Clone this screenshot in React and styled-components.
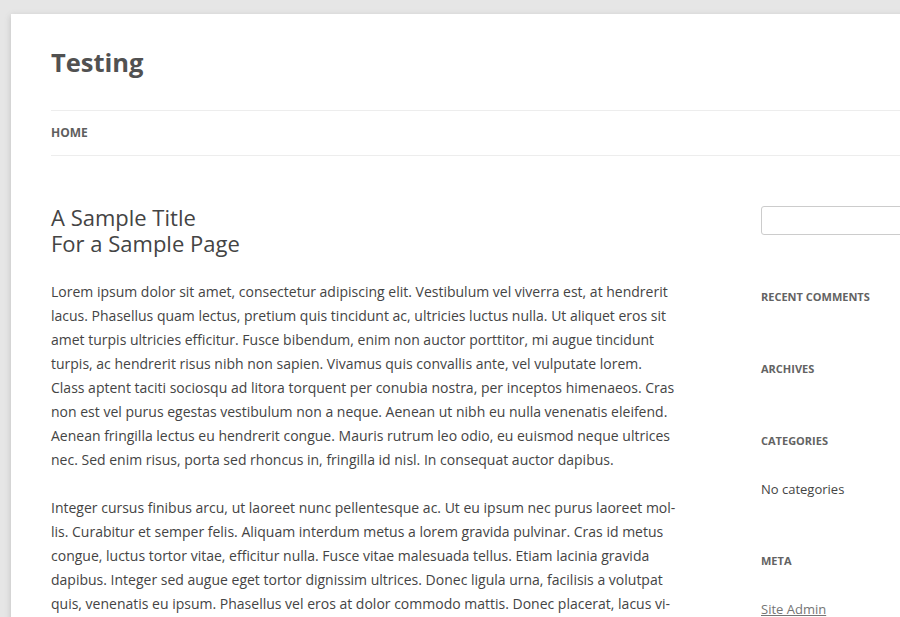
import styled, { createGlobalStyle } from 'styled-components';

const GlobalStyle = createGlobalStyle`
  html, body {
    margin: 0;
    padding: 0;
    background: #e6e6e6;
    overflow: hidden;
  }
  body {
    font-family: 'Open Sans', 'Liberation Sans', Helvetica, Arial, sans-serif;
    color: #444;
  }
`;

const Page = styled.div`
  width: 960px;
  margin: 14px 0 0 11px;
  padding: 0 40px;
  background: #fff;
  box-shadow: rgba(100, 100, 100, 0.3) 0 2px 6px;
  min-height: 700px;
`;

const Header = styled.header`
  padding-top: 24px;
`;

const SiteTitle = styled.h1`
  margin: 0;
  font-size: 25.5px;
  line-height: 48px;
  font-weight: 700;
  color: #515151;
`;

const Nav = styled.nav`
  margin-top: 24px;
  border-top: 1px solid #ededed;
  border-bottom: 1px solid #ededed;
  display: flex;
`;

const NavItem = styled.a`
  font-size: 12px;
  line-height: 44px;
  font-weight: 700;
  text-transform: uppercase;
  color: #5e5e5e;
  text-decoration: none;
`;

const Main = styled.div`
  display: grid;
  grid-template-columns: 626px 170px;
  column-gap: 84px;
  padding-top: 48px;
`;

const Article = styled.article``;

const EntryTitle = styled.h2`
  margin: 0 0 24px;
  font-size: 22px;
  line-height: 26px;
  font-weight: 400;
  color: #444;
`;

const Para = styled.p`
  margin: 0 0 24px;
  font-size: 14px;
  line-height: 24px;
  color: #444;
`;

const Sidebar = styled.aside`
  display: flex;
  flex-direction: column;
  gap: 48px;
`;

const SearchInput = styled.input`
  box-sizing: border-box;
  margin: 2px 0 2px;
  width: 170px;
  height: 29px;
  border: 1px solid #ccc;
  border-radius: 3px;
  padding: 4px 6px;
  font-family: inherit;
  font-size: 13px;
`;

const Widget = styled.section`
  display: flex;
  flex-direction: column;
  gap: 24px;
`;

const WidgetTitle = styled.h3`
  margin: 0;
  font-size: 11px;
  line-height: 24px;
  font-weight: 700;
  text-transform: uppercase;
  color: #636363;
`;

const WidgetList = styled.ul`
  margin: 0;
  padding: 0;
  list-style: none;
  font-size: 13px;
  line-height: 24px;
  color: #444;
`;

const WidgetLink = styled.a`
  color: #757575;
  text-decoration: underline;
`;

const paragraphs = [
  'Lorem ipsum dolor sit amet, consectetur adipiscing elit. Vestibulum vel viverra est, at hendrerit lacus. Phasellus quam lectus, pretium quis tincidunt ac, ultricies luctus nulla. Ut aliquet eros sit amet turpis ultricies efficitur. Fusce bibendum, enim non auctor porttitor, mi augue tincidunt turpis, ac hendrerit risus nibh non sapien. Vivamus quis convallis ante, vel vulputate lorem. Class aptent taciti sociosqu ad litora torquent per conubia nostra, per inceptos himenaeos. Cras non est vel purus egestas vestibulum non a neque. Aenean ut nibh eu nulla venenatis eleifend. Aenean fringilla lectus eu hendrerit congue. Mauris rutrum leo odio, eu euismod neque ultrices nec. Sed enim risus, porta sed rhoncus in, fringilla id nisl. In consequat auctor dapibus.',
  'Integer cursus finibus arcu, ut laoreet nunc pellentesque ac. Ut eu ipsum nec purus laoreet mol\u00ADlis. Curabitur et semper felis. Aliquam interdum metus a lorem gravida pulvinar. Cras id metus congue, luctus tortor vitae, efficitur nulla. Fusce vitae malesuada tellus. Etiam lacinia gravida dapibus. Integer sed augue eget tortor dignissim ultrices. Donec ligula urna, facilisis a volutpat quis, venenatis eu ipsum. Phasellus vel eros at dolor commodo mattis. Donec placerat, lacus vi\u00ADtae dictum pulvinar, nisi leo efficitur nibh, ac sodales lorem nisl in lectus.',
];

const widgets = [
  { title: 'Recent Comments', items: [] },
  { title: 'Archives', items: [] },
  { title: 'Categories', items: [{ text: 'No categories' }] },
  { title: 'Meta', items: [{ text: 'Site Admin', link: true }] },
];

function App() {
  return (
    <>
      <GlobalStyle />
      <Page>
        <Header>
          <SiteTitle>Testing</SiteTitle>
          <Nav>
            <NavItem href="#">Home</NavItem>
          </Nav>
        </Header>
        <Main>
          <Article>
            <EntryTitle>
              A Sample Title
              <br />
              For a Sample Page
            </EntryTitle>
            {paragraphs.map((p, i) => (
              <Para key={i}>{p}</Para>
            ))}
          </Article>
          <Sidebar>
            <SearchInput type="text" />
            {widgets.map((w) => (
              <Widget key={w.title}>
                <WidgetTitle>{w.title}</WidgetTitle>
                {w.items.length > 0 && (
                  <WidgetList>
                    {w.items.map((item) => (
                      <li key={item.text}>
                        {item.link ? <WidgetLink href="#">{item.text}</WidgetLink> : item.text}
                      </li>
                    ))}
                  </WidgetList>
                )}
              </Widget>
            ))}
          </Sidebar>
        </Main>
      </Page>
    </>
  );
}

export default App;
